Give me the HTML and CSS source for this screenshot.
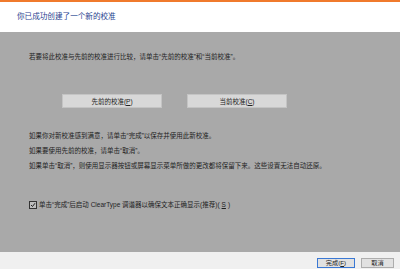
FILE: index.html
```html
<!DOCTYPE html>
<html lang="zh-CN">
<head>
  <meta charset="UTF-8">
  <title>显示颜色校准</title>
  <link rel="stylesheet" href="styles.css">
</head>
<body>
  <div class="dialog">
    <div class="topline"></div>
    <div class="header">
      <h1>你已成功创建了一个新的校准</h1>
    </div>
    <div class="main">
      <p class="intro">若要将此校准与先前的校准进行比较，请单击“先前的校准”和“当前校准”。</p>
      <div class="compare">
        <button class="btn-big">先前的校准(<u>P</u>)</button>
        <button class="btn-big">当前校准(<u>C</u>)</button>
      </div>
      <div class="notes">
        <p>如果你对新校准感到满意，请单击“完成”以保存并使用此新校准。</p>
        <p>如果要使用先前的校准，请单击“取消”。</p>
        <p>如果单击“取消”，则使用显示器按钮或屏幕显示菜单所做的更改都将保留下来。这些设置无法自动还原。</p>
      </div>
      <label class="check">
        <span class="box">
          <svg width="6" height="6" viewBox="0 0 6 6"><path d="M1 3 L2.5 4.5 L5 1.2" fill="none" stroke="#222" stroke-width="1"/></svg>
        </span>
        单击“完成”后启动 ClearType 调谐器以确保文本正确显示(推荐)(<u>S</u>)
      </label>
    </div>
    <div class="footer">
      <button class="btn-small primary">完成(<u>F</u>)</button>
      <button class="btn-small">取消</button>
    </div>
  </div>
</body>
</html>
```

FILE: styles.css
```css
body {
  margin: 0;
  background: #fff;
  font-family: "Liberation Sans", "Noto Sans CJK SC", sans-serif;
}
.dialog {
  width: 400px;
  height: 269px;
  display: flex;
  flex-direction: column;
  overflow: hidden;
}
.topline {
  height: 2px;
  background: #f07a2c;
}
.header {
  height: 30px;
  background: #fff;
  padding-left: 17px;
  display: flex;
  align-items: center;
}
h1 {
  margin: 0;
  font-size: 7.6px;
  font-weight: normal;
  color: #1f3f8f;
  line-height: 10px;
}
.main {
  height: 220px;
  background: #a9a9a9;
  padding: 20px 0 0 29px;
  box-sizing: border-box;
  color: #1e1e1e;
  font-size: 6.5px;
}
.main p {
  margin: 0;
  line-height: 10px;
}
.compare {
  display: flex;
  gap: 25px;
  margin: 32px 0 0 33px;
}
.btn-big {
  width: 100px;
  height: 14px;
  padding: 0;
  font-family: inherit;
  font-size: 6.5px;
  color: #222;
  background: #d8d8d8;
  border: 1px solid #c4c4c4;
}
.notes {
  margin-top: 23px;
}
.notes p + p {
  margin-top: 5px;
}
.check {
  display: flex;
  align-items: center;
  gap: 2px;
  margin-top: 29px;
  line-height: 10px;
}
.box {
  width: 6px;
  height: 6px;
  border: 1px solid #333;
  background: #bdbdbd;
  display: flex;
}
.footer {
  flex: 1;
  background: #f0f0f0;
  display: flex;
  justify-content: flex-end;
  align-items: flex-start;
  gap: 6px;
  padding: 6px 6px 0 0;
}
.btn-small {
  width: 33px;
  height: 10px;
  padding: 0;
  font-family: inherit;
  font-size: 6.2px;
  line-height: 8px;
  color: #222;
  background: #e1e1e1;
  border: 1px solid #adadad;
}
.btn-small.primary {
  width: 38px;
  border-color: #3a78d4;
}
```
